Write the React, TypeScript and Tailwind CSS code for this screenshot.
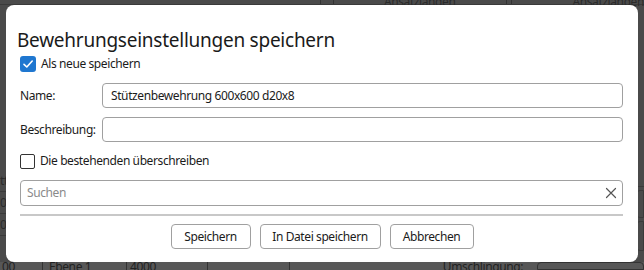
import React from "react";

function CheckIcon() {
  return (
    <svg width="12" height="12" viewBox="0 0 12 12" fill="none">
      <path d="M2 6.3 L4.8 9 L10.2 3" stroke="white" strokeWidth="1.6" strokeLinecap="round" strokeLinejoin="round" />
    </svg>
  );
}

function XIcon() {
  return (
    <svg width="12" height="12" viewBox="0 0 12 12" fill="none">
      <path d="M1.5 1.5 L10.5 10.5 M10.5 1.5 L1.5 10.5" stroke="#555" strokeWidth="1.2" strokeLinecap="round" />
    </svg>
  );
}

export default function App() {
  return (
    <div
      className="relative w-[644px] h-[270px] overflow-hidden bg-[#4a4a4a] text-[12px] tracking-[-0.4px] text-[#1b1b1b]"
      style={{ fontFamily: '"Segoe UI", "Noto Sans", sans-serif' }}
    >
      {/* dimmed application behind the dialog */}
      <div className="flex flex-col h-full text-[#2a2a2a]">
        <div className="flex h-[5px] border-b border-[#3a3a3a] leading-[4px]">
          <div className="w-[329px] border-r border-[#333]" />
          <div className="w-[13px] border-r border-[#333]" />
          <div className="w-[177px] border-r border-[#333] text-center">Ansatzlängen</div>
          <div className="w-[6px] border-r border-[#333]" />
          <div className="flex-1 pl-[60px]">Ansatzlängen</div>
        </div>
        <div className="flex-1 flex">
          <div className="w-[8px] flex flex-col pt-[165px]">
            <div className="h-[22px] border-b border-[#3a3a3a] leading-[22px]">tt</div>
            <div className="h-[22px] border-b border-[#3a3a3a] leading-[22px]">00</div>
            <div className="h-[22px] border-b border-[#3a3a3a] leading-[22px]">00</div>
          </div>
          <div className="flex-1" />
          <div className="w-[8px] flex flex-col pt-[172px] gap-[3px]">
            <div className="h-[10px] border-b border-[#3a3a3a]" />
            <div className="h-[28px] rounded-l-[4px] border border-[#3a3a3a]" />
            <div className="h-[30px] rounded-l-[4px] border border-[#3a3a3a]" />
          </div>
        </div>
        <div className="flex h-[8px] bg-[#575757] leading-[10px] text-[#222]">
          <div className="w-[43px] border-r border-[#333] pl-[2px]">00</div>
          <div className="w-[84px] border-r border-[#333] pl-[6px]">Ebene 1</div>
          <div className="w-[81px] border-r border-[#333] pl-[3px]">4000</div>
          <div className="w-[82px] border-r border-[#333]" />
          <div className="w-[241px] text-right pr-[8px]">Umschlingung:</div>
          <div className="flex-1 rounded-t-[4px] border border-[#333] ml-[6px]" />
        </div>
      </div>

      {/* dialog */}
      <div className="absolute left-[6px] top-[5px] w-[632px] h-[257px] bg-white rounded-[8px] flex flex-col pl-[14px] pr-[15px] pt-[21px]">
        <div className="text-[19px] leading-[28px] text-[#1a1a1a] ml-[-3px] tracking-[-0.25px]">
          Bewehrungseinstellungen speichern
        </div>
        <label className="flex items-center gap-[5px] mt-[2px] h-[16px]">
          <span className="w-[16px] h-[16px] rounded-[3px] bg-[#1f77d0] flex items-center justify-center">
            <CheckIcon />
          </span>
          <span>Als neue speichern</span>
        </label>
        <div className="flex items-center mt-[11px]">
          <span className="w-[82px]">Name:</span>
          <div className="flex-1 h-[25px] rounded-[4px] border border-[#a0a0a0] pl-[8px] flex items-center">
            Stützenbewehrung 600x600 d20x8
          </div>
        </div>
        <div className="flex items-center mt-[9px]">
          <span className="w-[82px]">Beschreibung:</span>
          <div className="flex-1 h-[25px] rounded-[4px] border border-[#a0a0a0]" />
        </div>
        <label className="flex items-center gap-[5px] mt-[11px] h-[16px]">
          <span className="w-[15px] h-[15px] rounded-[2px] border border-[#333] bg-white" />
          <span>Die bestehenden überschreiben</span>
        </label>
        <div className="mt-[11px] h-[26px] rounded-[4px] border border-[#a0a0a0] flex items-center pl-[6px] pr-[5px]">
          <span className="flex-1 text-[#8a8a8a]">Suchen</span>
          <XIcon />
        </div>
        <div className="mt-[8px] h-[2px] bg-[#c8c8c8]" />
        <div className="mt-[8px] flex justify-center gap-[9px] ml-[1px]">
          <button className="h-[25px] w-[80px] rounded-[4px] border border-[#a0a0a0] bg-white">Speichern</button>
          <button className="h-[25px] w-[121px] rounded-[4px] border border-[#a0a0a0] bg-white">In Datei speichern</button>
          <button className="h-[25px] w-[84px] rounded-[4px] border border-[#a0a0a0] bg-white">Abbrechen</button>
        </div>
      </div>
    </div>
  );
}
